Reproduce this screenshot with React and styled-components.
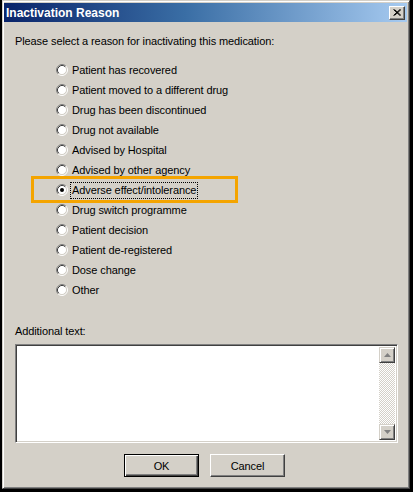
import React, { useState } from 'react';
import styled, { createGlobalStyle } from 'styled-components';

const GlobalStyle = createGlobalStyle`
  html, body {
    margin: 0;
    padding: 0;
    background: #000000;
  }
  body {
    font-family: "Liberation Sans", Arial, sans-serif;
    font-size: 11px;
    color: #000000;
  }
`;

const Stage = styled.div`
  width: 413px;
  height: 492px;
  background: #000000;
  overflow: hidden;
`;

const Window = styled.div`
  box-sizing: border-box;
  width: 408px;
  height: 489px;
  margin-left: 2px;
  display: flex;
  flex-direction: column;
  background: #d4d0c8;
  border: 1px solid;
  border-color: #d4d0c8 #404040 #404040 #d4d0c8;
  box-shadow: inset 1px 1px #ffffff, inset -1px -1px #808080;
  padding: 2px 2px 2px 1px;
`;

const TitleBar = styled.div`
  height: 19px;
  display: flex;
  align-items: center;
  justify-content: space-between;
  padding: 0 2px 0 2px;
  background: linear-gradient(to right, #0a246a 0%, #3a6ea5 45%, #a6caf0 100%);
`;

const Title = styled.span`
  color: #ffffff;
  font-weight: 700;
  font-size: 12px;
`;

const CloseButton = styled.div`
  box-sizing: border-box;
  width: 16px;
  height: 14px;
  display: flex;
  align-items: center;
  justify-content: center;
  background: #d4d0c8;
  border: 1px solid;
  border-color: #ffffff #404040 #404040 #ffffff;
  box-shadow: inset -1px -1px #808080;
`;

const Body = styled.div`
  flex: 1;
  display: flex;
  flex-direction: column;
  padding: 13px 9px 0 11px;
  letter-spacing: -0.1px;
`;

const Prompt = styled.div`
  line-height: 13px;
`;

const ReasonList = styled.div`
  display: flex;
  flex-direction: column;
  margin-top: 12px;
  padding-left: 41px;
`;

const Row = styled.label`
  position: relative;
  height: 20px;
  display: flex;
  align-items: center;
  gap: 4px;
  cursor: default;
`;

const Highlight = styled.div`
  position: absolute;
  left: -25px;
  top: -4px;
  width: 207px;
  height: 27px;
  box-sizing: border-box;
  border: 3px solid #f4a400;
  pointer-events: none;
`;

const RowText = styled.span`
  line-height: 13px;
  outline: ${(p) => (p.$focused ? '1px dotted #000000' : 'none')};
  outline-offset: 1px;
`;

const Caption = styled.div`
  line-height: 13px;
  margin-top: 25px;
`;

const TextBox = styled.div`
  box-sizing: border-box;
  height: 99px;
  margin-top: 6px;
  display: flex;
  background: #ffffff;
  border: 1px solid;
  border-color: #808080 #ffffff #ffffff #808080;
  box-shadow: inset 1px 1px #404040, inset -1px -1px #d4d0c8;
  padding: 2px;
`;

const TextArea = styled.div`
  flex: 1;
`;

const ScrollBar = styled.div`
  width: 16px;
  display: flex;
  flex-direction: column;
  background: repeating-conic-gradient(#d4d0c8 0 25%, #ffffff 0 50%) 0 0 / 2px 2px;
`;

const ScrollButton = styled.div`
  box-sizing: border-box;
  width: 16px;
  height: 16px;
  display: flex;
  align-items: center;
  justify-content: center;
  background: #d4d0c8;
  border: 1px solid;
  border-color: #d4d0c8 #404040 #404040 #d4d0c8;
  box-shadow: inset 1px 1px #ffffff, inset -1px -1px #808080;
`;

const Track = styled.div`
  flex: 1;
`;

const ButtonRow = styled.div`
  display: flex;
  justify-content: center;
  gap: 11px;
  margin-top: 11px;
  padding-right: 4px;
`;

const Button = styled.div`
  box-sizing: border-box;
  width: 75px;
  height: 23px;
  display: flex;
  align-items: center;
  justify-content: center;
  background: #d4d0c8;
  border: 1px solid;
  border-color: ${(p) => (p.$default ? '#000000' : '#ffffff #404040 #404040 #ffffff')};
  box-shadow: ${(p) =>
    p.$default
      ? 'inset 1px 1px #ffffff, inset -1px -1px #404040, inset -2px -2px #808080'
      : 'inset -1px -1px #808080'};
`;

const reasons = [
  'Patient has recovered',
  'Patient moved to a different drug',
  'Drug has been discontinued',
  'Drug not available',
  'Advised by Hospital',
  'Advised by other agency',
  'Adverse effect/intolerance',
  'Drug switch programme',
  'Patient decision',
  'Patient de-registered',
  'Dose change',
  'Other',
];

const Radio = ({ checked }) => (
  <svg width="12" height="12" viewBox="0 0 12 12">
    <circle cx="6" cy="6" r="4.5" fill="#ffffff" />
    <path d="M2.11 9.89 A5.5 5.5 0 0 1 9.89 2.11" fill="none" stroke="#808080" />
    <path d="M9.89 2.11 A5.5 5.5 0 0 1 2.11 9.89" fill="none" stroke="#ffffff" />
    <path d="M2.82 9.18 A4.5 4.5 0 0 1 9.18 2.82" fill="none" stroke="#404040" />
    <path d="M9.18 2.82 A4.5 4.5 0 0 1 2.82 9.18" fill="none" stroke="#d4d0c8" />
    {checked && <circle cx="6" cy="6" r="2" fill="#000000" />}
  </svg>
);

const Arrow = ({ down }) => (
  <svg width="7" height="4" viewBox="0 0 7 4">
    <path d={down ? 'M0 0 H7 L3.5 4 Z' : 'M3.5 0 L7 4 H0 Z'} fill="#808080" />
  </svg>
);

const App = () => {
  const [selected, setSelected] = useState(6); // adverse effect picked

  return (
    <>
      <GlobalStyle />
      <Stage>
        <Window>
          <TitleBar>
            <Title>Inactivation Reason</Title>
            <CloseButton>
              <svg width="8" height="7" viewBox="0 0 8 7">
                <path d="M0.5 0.5 L7 6.5 M1.5 0.5 L8 6.5 M7 0.5 L0.5 6.5 M8 0.5 L1.5 6.5" stroke="#000" strokeWidth="1" />
              </svg>
            </CloseButton>
          </TitleBar>
          <Body>
            <Prompt>Please select a reason for inactivating this medication:</Prompt>
            <ReasonList>
              {reasons.map((r, i) => (
                <Row key={r} onClick={() => setSelected(i)}>
                  {i === 6 && <Highlight />}
                  <Radio checked={selected === i} />
                  <RowText $focused={selected === i}>{r}</RowText>
                </Row>
              ))}
            </ReasonList>
            <Caption>Additional text:</Caption>
            <TextBox>
              <TextArea />
              <ScrollBar>
                <ScrollButton>
                  <Arrow />
                </ScrollButton>
                <Track />
                <ScrollButton>
                  <Arrow down />
                </ScrollButton>
              </ScrollBar>
            </TextBox>
            <ButtonRow>
              <Button $default>OK</Button>
              <Button>Cancel</Button>
            </ButtonRow>
          </Body>
        </Window>
      </Stage>
    </>
  );
};

export default App;
